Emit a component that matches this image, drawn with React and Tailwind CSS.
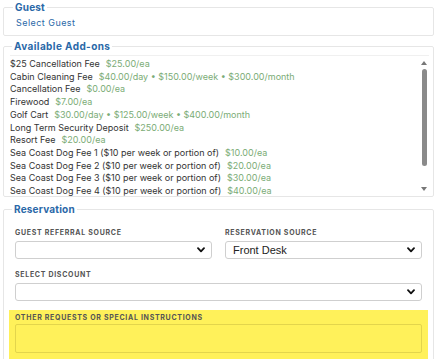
import React from 'react';

const addOns = [
  { name: '$25 Cancellation Fee', prices: ['$25.00/ea'] },
  { name: 'Cabin Cleaning Fee', prices: ['$40.00/day', '$150.00/week', '$300.00/month'] },
  { name: 'Cancellation Fee', prices: ['$0.00/ea'] },
  { name: 'Firewood', prices: ['$7.00/ea'] },
  { name: 'Golf Cart', prices: ['$30.00/day', '$125.00/week', '$400.00/month'] },
  { name: 'Long Term Security Deposit', prices: ['$250.00/ea'] },
  { name: 'Resort Fee', prices: ['$20.00/ea'] },
  { name: 'Sea Coast Dog Fee 1 ($10 per week or portion of)', prices: ['$10.00/ea'] },
  { name: 'Sea Coast Dog Fee 2 ($10 per week or portion of)', prices: ['$20.00/ea'] },
  { name: 'Sea Coast Dog Fee 3 ($10 per week or portion of)', prices: ['$30.00/ea'] },
  { name: 'Sea Coast Dog Fee 4 ($10 per week or portion of)', prices: ['$40.00/ea'] },
];

function Chevron() {
  return (
    <svg width="8" height="6" viewBox="0 0 8 6" className="shrink-0">
      <path d="M1 1.2 L4 4.4 L7 1.2" fill="none" stroke="#111" strokeWidth="1.8" strokeLinecap="round" strokeLinejoin="round" />
    </svg>
  );
}

function Select({ value }) {
  return (
    <div className="h-[18px] flex items-center justify-between pl-[7px] pr-[6px] bg-white border border-[#cfcfcf] rounded-[3px]">
      <span className="text-[11px] text-[#222] font-['Liberation_Sans',sans-serif]">{value}</span>
      <Chevron />
    </div>
  );
}

function Label({ children }) {
  return (
    <div className="text-[7px] font-bold tracking-[0.1em] text-[#555] uppercase leading-[9px] mb-[4px]">
      {children}
    </div>
  );
}

export default function App() {
  return (
    <div className="w-[437px] h-[359px] overflow-hidden bg-white font-['Inter',sans-serif] text-[#333]">
      <div className="pl-[3px] pr-[3px] flex flex-col">
        <fieldset className="border border-[#e6e6e6] rounded-[2px] px-[8px] h-[36px]">
          <legend className="ml-[1px] px-[2px] text-[10px] font-bold text-[#2a68a8] tracking-[0.02em] leading-[14px]">Guest</legend>
          <div className="pl-[4px] pt-[3px] text-[9px] text-[#2a68a8] tracking-[0.05em] leading-[12px]">Select Guest</div>
        </fieldset>

        <fieldset className="mt-[3px] border border-[#e6e6e6] rounded-[2px] pl-[6px] pr-[4px] h-[158px]">
          <legend className="ml-[2px] px-[2px] text-[10px] font-bold text-[#2a68a8] tracking-[0.04em] leading-[14px]">Available Add-ons</legend>
          <div className="flex h-[143px] mt-[2px] border-t border-[#f0f0f0]">
            <div className="flex-1 overflow-hidden pt-[2px]">
              {addOns.map((a) => (
                <div key={a.name} className="text-[9px] leading-[12.7px] whitespace-nowrap">
                  <span className="text-[#333]">{a.name}</span>
                  <span className="ml-[6px] text-[#7bac76]">{a.prices.join(' \u2022 ')}</span>
                </div>
              ))}
            </div>
            <div className="w-[10px] flex flex-col items-center pt-[5px] pb-[7px]">
              <svg width="6" height="4" viewBox="0 0 6 4"><path d="M0 4 L3 0 L6 4 Z" fill="#777" /></svg>
              <div className="mt-[4px] w-[5px] h-[97px] rounded-full bg-[#8a8a8a]" />
              <div className="flex-1" />
              <svg width="6" height="4" viewBox="0 0 6 4"><path d="M0 0 L6 0 L3 4 Z" fill="#777" /></svg>
            </div>
          </div>
        </fieldset>

        <fieldset className="mt-[5px] border border-[#e6e6e6] rounded-[2px] px-[6px] h-[170px]">
          <legend className="ml-[2px] px-[2px] text-[10px] font-bold text-[#2a68a8] tracking-[0.02em] leading-[14px]">Reservation</legend>
          <div className="grid grid-cols-2 gap-x-[13px] px-[5px] mt-[12px]">
            <div>
              <Label>Guest Referral Source</Label>
              <Select value="" />
            </div>
            <div>
              <Label>Reservation Source</Label>
              <Select value="Front Desk" />
            </div>
          </div>
          <div className="px-[5px] mt-[11px]">
            <Label>Select Discount</Label>
            <Select value="" />
          </div>
          <div className="mt-[9px] -mx-[1px] bg-[#fff15a] px-[6px] pt-[3px] pb-[8px]">
            <div className="text-[7px] font-bold tracking-[0.1em] text-[#555] uppercase leading-[9px] mb-[2px]">
              Other Requests or Special Instructions
            </div>
            <div className="h-[29px] border border-[#e3d54c] rounded-[2px]" />
          </div>
        </fieldset>
      </div>
    </div>
  );
}
